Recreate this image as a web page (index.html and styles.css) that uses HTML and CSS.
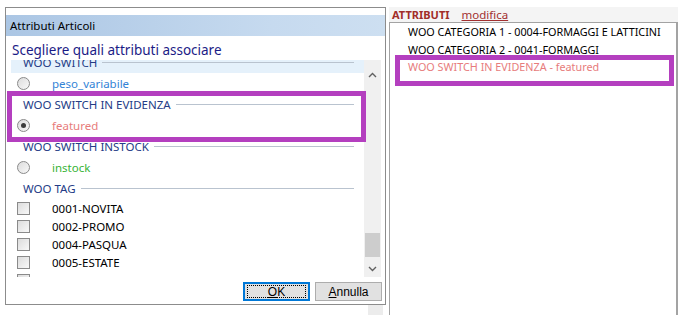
FILE: index.html
```html
<!DOCTYPE html>
<html lang="it">
<head>
    <meta charset="UTF-8">
    <title>Attributi Articoli</title>
    <link rel="stylesheet" href="styles.css">
</head>
<body>
    <div class="screen">
        <div class="dialog">
            <div class="dlg-gap"></div>
            <div class="titlebar">Attributi Articoli</div>
            <div class="prompt">Scegliere quali attributi associare</div>

            <div class="listwrap">
                <div class="list">
                    <div class="list-inner">
                        <div class="group hot"><span>WOO SWITCH</span><i></i></div>
                        <div class="item"><span class="radio"></span><span class="blue">peso_variabile</span></div>

                        <div class="group"><span>WOO SWITCH IN EVIDENZA</span><i></i></div>
                        <div class="item"><span class="radio on"></span><span class="red">featured</span></div>

                        <div class="group"><span>WOO SWITCH INSTOCK</span><i></i></div>
                        <div class="item"><span class="radio"></span><span class="green">instock</span></div>

                        <div class="group"><span>WOO TAG</span><i></i></div>
                        <div class="item check"><span class="box"></span><span>0001-NOVITA</span></div>
                        <div class="item check"><span class="box"></span><span>0002-PROMO</span></div>
                        <div class="item check"><span class="box"></span><span>0004-PASQUA</span></div>
                        <div class="item check"><span class="box"></span><span>0005-ESTATE</span></div>
                        <div class="item check"><span class="box"></span></div>
                    </div>
                </div>
                <div class="scrollbar">
                    <div class="arrow">
                        <svg width="9" height="6" viewBox="0 0 9 6"><path d="M1 5 L4.5 1.5 L8 5" fill="none" stroke="#606060" stroke-width="1.4"/></svg>
                    </div>
                    <div class="track"><div class="thumb"></div></div>
                    <div class="arrow">
                        <svg width="9" height="6" viewBox="0 0 9 6"><path d="M1 1 L4.5 4.5 L8 1" fill="none" stroke="#606060" stroke-width="1.4"/></svg>
                    </div>
                </div>
            </div>

            <div class="buttons">
                <button class="btn default"><span><u>O</u>K</span></button>
                <button class="btn"><span><u>A</u>nnulla</span></button>
            </div>
        </div>

        <div class="side">
            <div class="side-head">
                <span class="side-title">ATTRIBUTI</span>
                <a href="#" class="side-link">modifica</a>
            </div>
            <div class="side-box">
                <div class="side-row">WOO CATEGORIA 1 - 0004-FORMAGGI E LATTICINI</div>
                <div class="side-row">WOO CATEGORIA 2 - 0041-FORMAGGI</div>
                <div class="side-row red">WOO SWITCH IN EVIDENZA - featured</div>
            </div>
        </div>
    </div>

    <div class="under-scroll"></div>
    <div class="mark mark-left"></div>
    <div class="mark mark-right"></div>
</body>
</html>
```

FILE: styles.css
```css
* {
    margin: 0;
    padding: 0;
    box-sizing: border-box;
}

body {
    width: 685px;
    height: 315px;
    overflow: hidden;
    position: relative;
    background: #fff;
    font-family: "Noto Sans", "Open Sans", sans-serif;
    font-size: 11.5px;
    color: #000;
}

.screen {
    display: flex;
    height: 315px;
    overflow: hidden;
}

/* dialog */
.dialog {
    margin: 7px 0 0 5px;
    width: 381px;
    height: 298px;
    flex-shrink: 0;
    border: 1px solid #8c8c8c;
    background: #fff;
    display: flex;
    flex-direction: column;
    position: relative;
    z-index: 2;
}

.dlg-gap {
    height: 7px;
}

.titlebar {
    height: 21px;
    line-height: 21px;
    padding-left: 4px;
    background: linear-gradient(to right, #abc6e4, #c6daef 70%, #cddff1);
}

.prompt {
    height: 24px;
    padding: 5px 0 0 6px;
    line-height: 19px;
    font-size: 13.5px;
    color: #1b1b86;
}

.listwrap {
    margin-left: 5px;
    width: 370px;
    height: 217px;
    display: flex;
}

.list {
    flex: 1;
    overflow: hidden;
}

.list-inner {
    margin-top: -8px;
}

.group {
    height: 21px;
    display: flex;
    align-items: center;
    padding-left: 12px;
    color: #243c86;
    white-space: nowrap;
}

.group.hot {
    background: #e5f1fb;
}

.group i {
    flex: 1;
    height: 1px;
    background: #b9c3cf;
    margin: 0 10px 0 5px;
}

.item {
    height: 21px;
    display: flex;
    align-items: center;
    padding-left: 6px;
}

.item.check {
    height: 18px;
}

.radio,
.box {
    width: 13px;
    height: 13px;
    margin-right: 22px;
    border: 1px solid #8a8a8a;
    background: linear-gradient(135deg, #dcdcdc, #f8f8f8);
    flex-shrink: 0;
}

.radio {
    border-radius: 50%;
    position: relative;
}

.radio.on::after {
    content: "";
    position: absolute;
    left: 3px;
    top: 3px;
    width: 5px;
    height: 5px;
    border-radius: 50%;
    background: #3c3c3c;
}

.blue { color: #3383d6; }
.red { color: #e77c7c; }
.green { color: #36b336; }

/* scrollbar */
.scrollbar {
    width: 17px;
    background: #f0f0f0;
    display: flex;
    flex-direction: column;
}

.arrow {
    height: 17px;
    display: flex;
    align-items: center;
    justify-content: center;
}

.arrow:first-child {
    margin-top: 6px;
}

.track {
    flex: 1;
    display: flex;
    flex-direction: column;
    justify-content: flex-end;
    padding: 0 1px 3px;
}

.thumb {
    height: 24px;
    background: #cdcdcd;
}

/* buttons */
.buttons {
    display: flex;
    justify-content: flex-end;
    gap: 5px;
    margin-top: 5px;
    padding-right: 3px;
}

.btn {
    width: 67px;
    height: 19px;
    font-family: "Liberation Sans", Arial, sans-serif;
    font-size: 12px;
    background: #e1e1e1;
    border: 1px solid #adadad;
    color: #000;
    display: flex;
    align-items: center;
    justify-content: center;
}

.btn.default {
    border: 2px solid #0078d7;
}

.btn.default span {
    display: block;
    width: 59px;
    height: 13px;
    line-height: 12px;
    border: 1px dotted #000;
    text-align: center;
}

/* right side */
.side {
    margin: 7px 0 0 3px;
    width: 289px;
    flex-shrink: 0;
    display: flex;
    flex-direction: column;
}

.side-head {
    height: 17px;
    background: #f4f4f4;
    padding-left: 3px;
    display: flex;
    align-items: center;
    gap: 12px;
}

.side-title {
    font-weight: bold;
    font-size: 11px;
    color: #a12d28;
}

.side-link {
    font-size: 11.5px;
    color: #a23030;
}

.side-box {
    height: 320px;
    flex-shrink: 0;
    border: 1px solid #a3a3a3;
    border-right-width: 2px;
    padding-left: 18px;
    font-size: 10.8px;
}

.side-row {
    height: 17.5px;
    line-height: 17.5px;
    white-space: nowrap;
}

.under-scroll {
    position: absolute;
    left: 368px;
    top: 305px;
    width: 15px;
    height: 10px;
    background: #ececec;
}

/* purple highlight marks */
.mark {
    position: absolute;
    border: 5px solid #b43fbf;
    z-index: 3;
}

.mark-left {
    left: 7px;
    top: 91px;
    width: 359px;
    height: 51px;
}

.mark-right {
    left: 395px;
    top: 55px;
    width: 279px;
    height: 31px;
}
```
